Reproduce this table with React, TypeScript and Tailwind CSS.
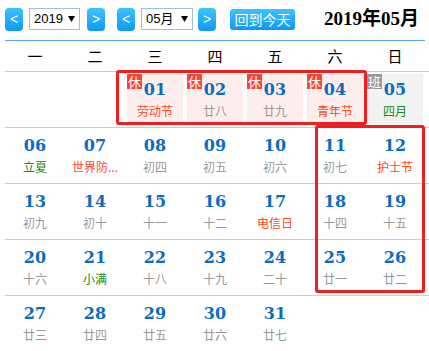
import React from 'react';

type Day = {
  d: string;
  sub: string;
  tone?: 'fest' | 'term' | 'plain';
  badge?: '休' | '班';
};

const weeks: (Day | null)[][] = [
  [null, null,
    { d: '01', sub: '劳动节', tone: 'fest', badge: '休' },
    { d: '02', sub: '廿八', badge: '休' },
    { d: '03', sub: '廿九', badge: '休' },
    { d: '04', sub: '青年节', tone: 'fest', badge: '休' },
    { d: '05', sub: '四月', tone: 'term', badge: '班' }],
  [{ d: '06', sub: '立夏', tone: 'term' }, { d: '07', sub: '世界防...', tone: 'fest' }, { d: '08', sub: '初四' }, { d: '09', sub: '初五' }, { d: '10', sub: '初六' }, { d: '11', sub: '初七' }, { d: '12', sub: '护士节', tone: 'fest' }],
  [{ d: '13', sub: '初九' }, { d: '14', sub: '初十' }, { d: '15', sub: '十一' }, { d: '16', sub: '十二' }, { d: '17', sub: '电信日', tone: 'fest' }, { d: '18', sub: '十四' }, { d: '19', sub: '十五' }],
  [{ d: '20', sub: '十六' }, { d: '21', sub: '小满', tone: 'term' }, { d: '22', sub: '十八' }, { d: '23', sub: '十九' }, { d: '24', sub: '二十' }, { d: '25', sub: '廿一' }, { d: '26', sub: '廿二' }],
  [{ d: '27', sub: '廿三' }, { d: '28', sub: '廿四' }, { d: '29', sub: '廿五' }, { d: '30', sub: '廿六' }, { d: '31', sub: '廿七' }, null, null],
];

const weekdays = ['一', '二', '三', '四', '五', '六', '日'];

const NavBtn = ({ label }: { label: string }) => (
  <div className="flex h-[23px] w-[18px] items-center justify-center rounded-[4px] bg-gradient-to-b from-[#3cc3ff] to-[#0a98f2] font-['Liberation_Sans',sans-serif] text-[14px] text-white">
    {label}
  </div>
);

// native-looking select box with a small black triangle
const FakeSelect = ({ value, w }: { value: string; w: string }) => (
  <div className={`flex h-[22px] items-center justify-between border border-[#9cc2e0] bg-white pl-[4px] pr-[4px] text-[13px] text-black ${w}`}>
    <span className="font-['Liberation_Sans','Noto_Sans_CJK_SC',sans-serif]">{value}</span>
    <svg width="7" height="6" viewBox="0 0 7 6">
      <path d="M0 0h7L3.5 6z" fill="#000" />
    </svg>
  </div>
);

const Cell = ({ day }: { day: Day | null }) => {
  if (!day) return <div className="m-[2px] h-[51px]" />;
  const bg = day.badge === '休' ? 'bg-[#fdeded]' : day.badge === '班' ? 'bg-[#f2f2f2]' : '';
  const subColor =
    day.tone === 'fest' ? 'text-[#ff4a1c]' : day.tone === 'term' ? 'text-[#188a18]' : 'text-[#999999]';
  return (
    <div className={`relative m-[2px] flex h-[51px] flex-col items-center pt-[6px] ${bg}`}>
      {day.badge && (
        <span
          className={`absolute left-0 top-0 flex h-[15px] w-[15px] items-center justify-center text-[13px] leading-none text-white ${
            day.badge === '休' ? 'bg-[#f4473a]' : 'bg-[#9a9a9a]'
          }`}
        >
          {day.badge}
        </span>
      )}
      <span className="font-['DejaVu_Serif',serif] text-[16px] font-bold leading-[20px] text-[#0b6dbf]">{day.d}</span>
      <span className={`mt-[3px] text-[12px] leading-[16px] ${subColor}`}>{day.sub}</span>
    </div>
  );
};

export default function App() {
  return (
    <div className="relative h-[351px] w-[429px] overflow-hidden bg-white font-['Noto_Sans_CJK_SC','Noto_Sans',sans-serif]">
      <div className="flex h-[40px] items-center pl-[5px] pb-[2px]">
        <NavBtn label="<" />
        <div className="ml-[6px]">
          <FakeSelect value="2019" w="w-[51px]" />
        </div>
        <div className="ml-[7px]">
          <NavBtn label=">" />
        </div>
        <div className="ml-[12px]">
          <NavBtn label="<" />
        </div>
        <div className="ml-[6px]">
          <FakeSelect value="05月" w="w-[52px]" />
        </div>
        <div className="ml-[5px]">
          <NavBtn label=">" />
        </div>
        <div className="ml-[14px] flex h-[21px] w-[65px] items-center justify-center rounded-[3px] bg-gradient-to-b from-[#3cc3ff] to-[#0a98f2] text-[14px] text-white">
          回到今天
        </div>
        <div className="ml-[29px] font-['Liberation_Serif','Noto_Sans_CJK_SC',serif] text-[19px] font-bold text-black">
          2019年05月
        </div>
      </div>

      <div className="ml-[5px] w-[424px]">
        <div className="grid h-[31px] w-[420px] grid-cols-7 items-center border-t border-[#5aa8f0] text-[15px] text-black">
          {weekdays.map((w) => (
            <div key={w} className="text-center">{w}</div>
          ))}
        </div>
        {weeks.map((row, i) => (
          <div key={i} className="border-t border-[#cccccc]">
            <div className="grid w-[420px] grid-cols-7">
              {row.map((day, j) => (
                <Cell key={j} day={day} />
              ))}
            </div>
          </div>
        ))}
      </div>

      <div className="pointer-events-none absolute left-[116px] top-[70px] h-[55px] w-[251px] rounded-[3px] border-[3px] border-[#f01e1e]" />
      <div className="pointer-events-none absolute left-[315px] top-[125px] h-[168px] w-[110px] rounded-[3px] border-[3px] border-[#f01e1e]" />
    </div>
  );
}
